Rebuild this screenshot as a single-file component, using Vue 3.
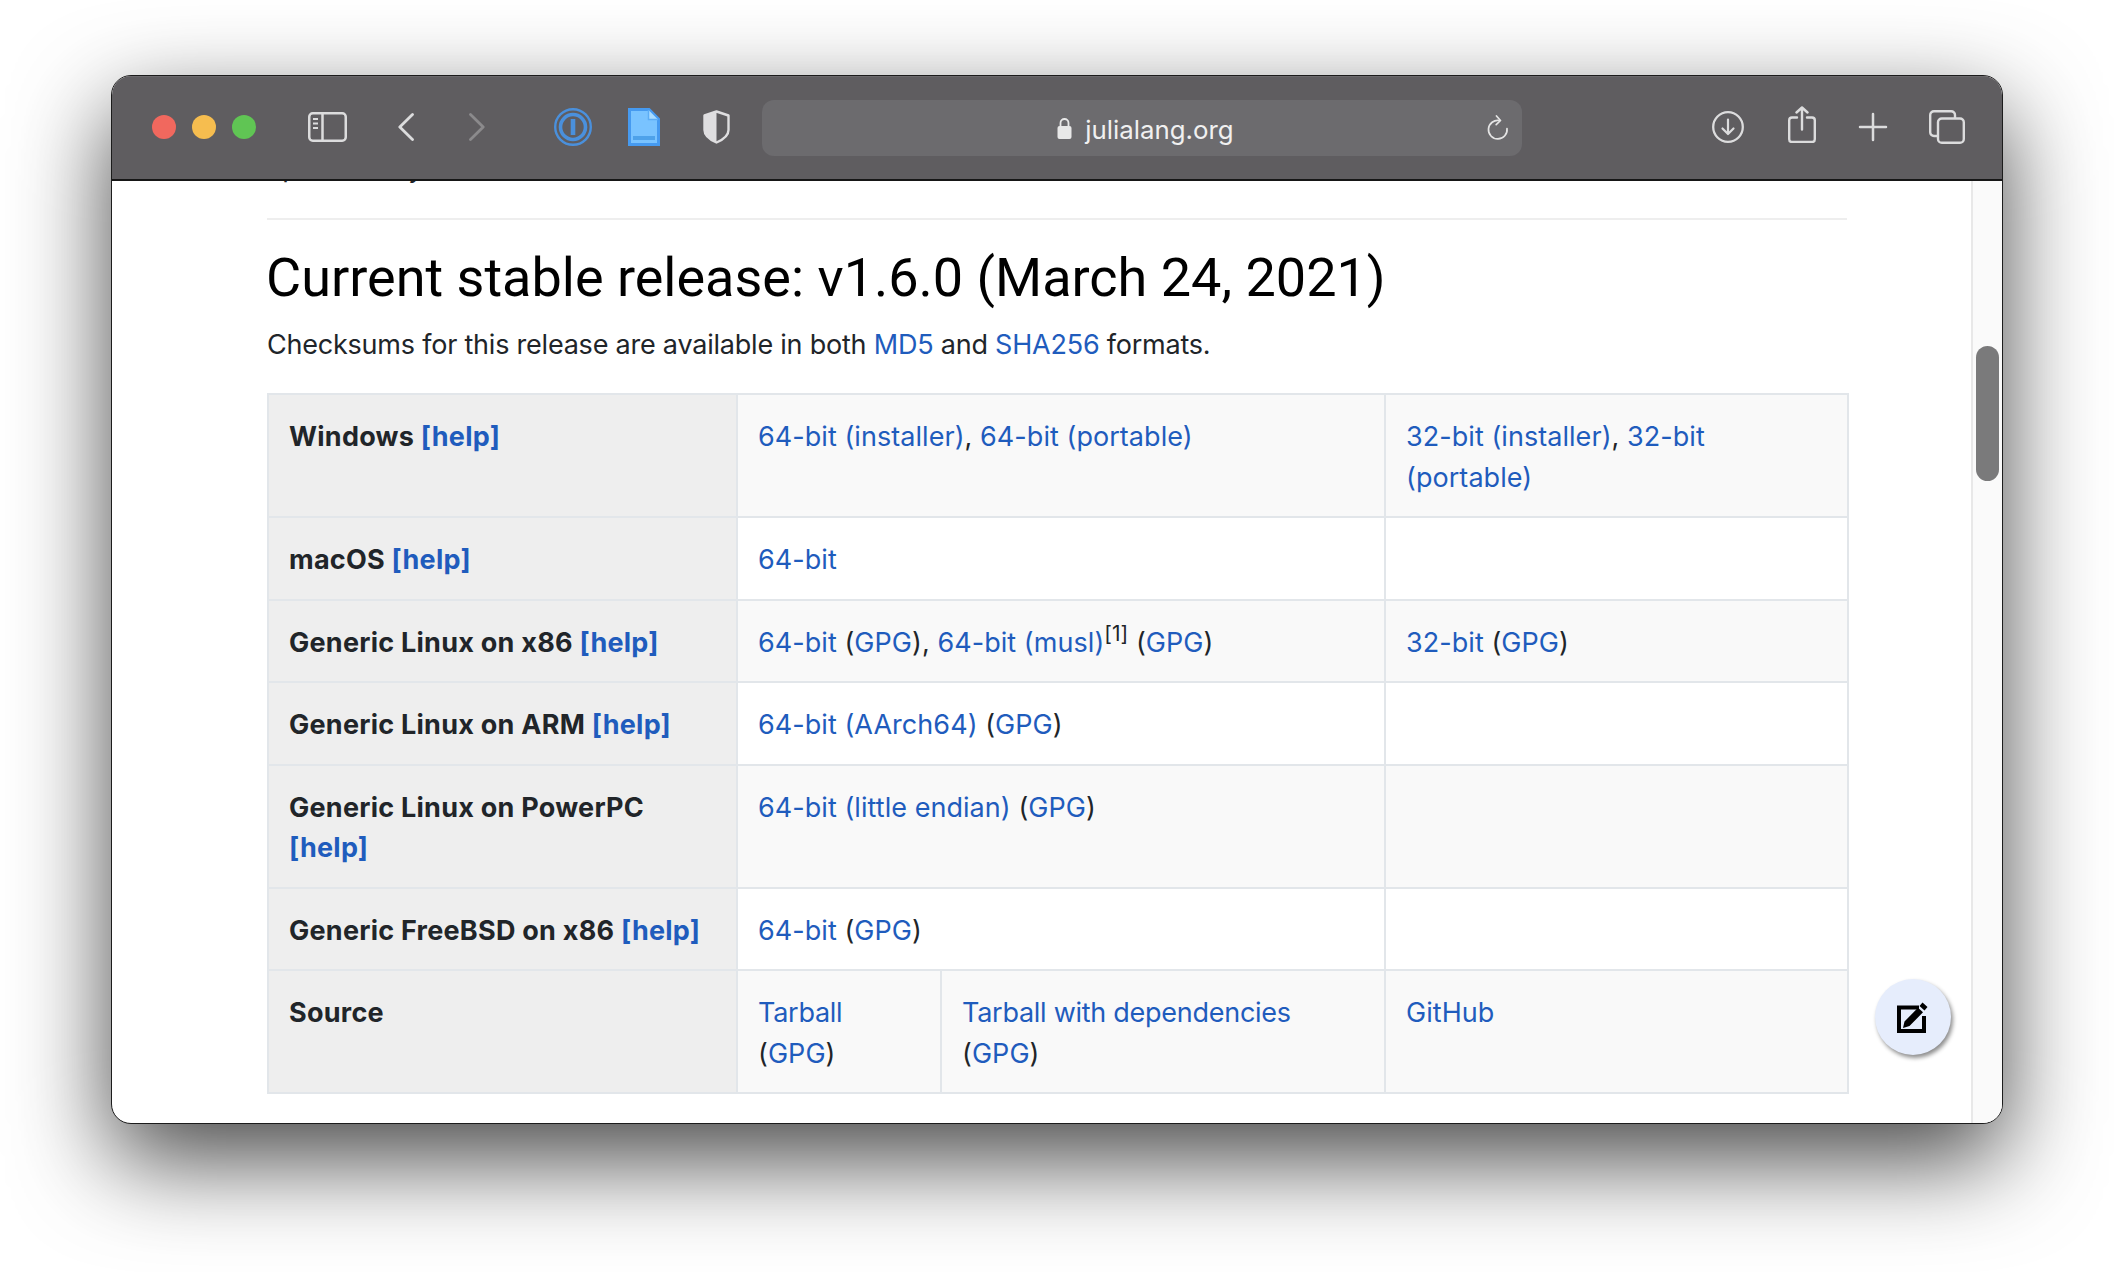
<template>
  <div class="stage">
    <div class="window">
      <header class="toolbar">
        <div class="lights">
          <span class="light light--red"></span>
          <span class="light light--yellow"></span>
          <span class="light light--green"></span>
        </div>
        <svg class="ico ico-sidebar" width="39" height="30" viewBox="0 0 39 30" fill="none" stroke="#dcdcdd" stroke-width="2.5">
          <rect x="1.25" y="1.25" width="36.5" height="27.5" rx="3.5" />
          <path d="M14.5 1v28" />
          <path d="M5 7h5M5 11.5h5M5 16h5" stroke-width="1.8" />
        </svg>
        <svg class="ico ico-back" width="16" height="28" viewBox="0 0 16 28" fill="none" stroke="#dcdcdd" stroke-width="2.8" stroke-linecap="round" stroke-linejoin="round">
          <path d="M14.5 1.5 1.8 14l12.7 12.5" />
        </svg>
        <svg class="ico ico-forward" width="16" height="28" viewBox="0 0 16 28" fill="none" stroke="#8b8a8c" stroke-width="2.8" stroke-linecap="round" stroke-linejoin="round">
          <path d="M1.5 1.5 14.2 14 1.5 26.5" />
        </svg>
        <svg class="ico ico-onepass" width="38" height="38" viewBox="0 0 38 38" fill="none" stroke="#4a90dc">
          <circle cx="19" cy="19" r="17.8" stroke-width="2.4" />
          <circle cx="19" cy="19" r="12.5" stroke-width="3.6" />
          <path d="M19 11v16" stroke-width="4.6" />
        </svg>
        <svg class="ico ico-doc" width="32" height="38" viewBox="0 0 32 38">
          <path d="M1.5 1.5H21L30.5 11v25.5h-29z" fill="#79c3ff" stroke="#469af0" stroke-width="3" />
          <path d="M20.5 2v9.5H30" fill="#a9dcff" stroke="#5cadf5" stroke-width="1.5" />
          <path d="M5 28h22v4H5z" fill="#4ea2ea" />
        </svg>
        <svg class="ico ico-shield" width="27" height="34" viewBox="0 0 27 34" fill="none">
          <path d="M13.5 1.5 25.5 5.5V20c0 5-5 9.500-12 12.500C6.500 29.500 1.500 25 1.500 20V5.500z" stroke="#dfdee0" stroke-width="2.4" stroke-linejoin="round" />
          <path d="M13.500 1.500V32.500C6.500 29.500 1.500 25 1.500 20V5.500z" fill="#dfdee0" />
        </svg>
        <div class="urlbar">
          <span></span>
          <div class="urlbar__site">
            <svg width="15" height="22" viewBox="0 0 15 22">
              <path d="M3.500 9V6a4 4 0 0 1 8 0v3" fill="none" stroke="#e8e8e8" stroke-width="1.800" />
              <rect x="0.500" y="9" width="14" height="13" rx="2" fill="#e8e8e8" />
            </svg>
            <span class="urlbar__host">julialang.org</span>
          </div>
          <svg class="urlbar__reload" width="22" height="25" viewBox="0 0 22 25" fill="none" stroke="#e4e4e4" stroke-width="1.700" stroke-linecap="round" stroke-linejoin="round">
            <path d="M12.500 5.500A9.300 9.300 0 1 0 20 13.500" />
            <path d="M9.500 1 13.500 5.500 9.200 9.600" />
          </svg>
        </div>
        <svg class="ico ico-download" width="32" height="32" viewBox="0 0 32 32" fill="none" stroke="#dcdcdd" stroke-linecap="round" stroke-linejoin="round">
          <circle cx="16" cy="16" r="14.800" stroke-width="2.300" />
          <path d="M16 8.500v14M10.500 17.500l5.500 5.500 5.500-5.500" stroke-width="2.200" />
        </svg>
        <svg class="ico ico-share" width="28" height="37" viewBox="0 0 28 37" fill="none" stroke="#dcdcdd" stroke-width="2.400" stroke-linecap="round" stroke-linejoin="round">
          <path d="M9 11.500H4a2.800 2.800 0 0 0-2.800 2.800v18.900A2.800 2.800 0 0 0 4 36h20a2.800 2.800 0 0 0 2.800-2.800V14.300A2.800 2.800 0 0 0 24 11.500h-5" />
          <path d="M14 23.500V1.500M8.500 6.500 14 1.500l5.500 5" />
        </svg>
        <svg class="ico ico-plus" width="30" height="30" viewBox="0 0 30 30" fill="none" stroke="#dcdcdd" stroke-width="2.500" stroke-linecap="round">
          <path d="M15 2v26M2 15h26" />
        </svg>
        <svg class="ico ico-tabs" width="36" height="34" viewBox="0 0 36 34" fill="none" stroke="#dcdcdd" stroke-width="2.400">
          <path d="M8.500 26H5a3.800 3.800 0 0 1-3.800-3.800V5A3.800 3.800 0 0 1 5 1.200h17.200A3.800 3.800 0 0 1 26 5v3.500" />
          <rect x="9" y="8.500" width="25.800" height="24.300" rx="3.800" />
        </svg>
      </header>

      <div class="viewport">
        <main class="page">
          <p class="page__clipped">specifically</p>
          <hr class="page__rule" />
          <h1>Current stable release: v1.6.0 (March 24, 2021)</h1>
          <p class="page__lead">
            Checksums for this release are available in both <a href="#">MD5</a> and <a href="#">SHA256</a> formats.
          </p>

          <table class="downloads">
            <colgroup>
              <col class="downloads__c1" />
              <col class="downloads__c2" />
              <col class="downloads__c3" />
              <col class="downloads__c4" />
            </colgroup>
            <tbody>
              <tr>
                <th>Windows <a href="#">[help]</a></th>
                <td colspan="2"><a href="#">64-bit (installer)</a>, <a href="#">64-bit (portable)</a></td>
                <td><a href="#">32-bit (installer)</a>, <a href="#">32-bit (portable)</a></td>
              </tr>
              <tr>
                <th>macOS <a href="#">[help]</a></th>
                <td colspan="2"><a href="#">64-bit</a></td>
                <td></td>
              </tr>
              <tr>
                <th>Generic Linux on x86 <a href="#">[help]</a></th>
                <td colspan="2">
                  <a href="#">64-bit</a> (<a href="#">GPG</a>), <a href="#">64-bit (musl)</a><sup>[1]</sup> (<a href="#">GPG</a>)
                </td>
                <td><a href="#">32-bit</a> (<a href="#">GPG</a>)</td>
              </tr>
              <tr>
                <th>Generic Linux on ARM <a href="#">[help]</a></th>
                <td colspan="2"><a href="#">64-bit (AArch64)</a> (<a href="#">GPG</a>)</td>
                <td></td>
              </tr>
              <tr>
                <th>Generic Linux on PowerPC <a href="#">[help]</a></th>
                <td colspan="2"><a href="#">64-bit (little endian)</a> (<a href="#">GPG</a>)</td>
                <td></td>
              </tr>
              <tr>
                <th>Generic FreeBSD on x86 <a href="#">[help]</a></th>
                <td colspan="2"><a href="#">64-bit</a> (<a href="#">GPG</a>)</td>
                <td></td>
              </tr>
              <tr>
                <th>Source</th>
                <td><a href="#" class="tight">Tarball</a><br />(<a href="#">GPG</a>)</td>
                <td><a href="#" class="tight">Tarball with dependencies</a><br />(<a href="#">GPG</a>)</td>
                <td><a href="#">GitHub</a></td>
              </tr>
            </tbody>
          </table>

          <button type="button" class="fab" aria-label="Edit">
            <svg width="32" height="32" viewBox="0 0 32 32">
              <path d="M22 6.500H2v23.500h25V15" fill="none" stroke="#000" stroke-width="4" />
              <path d="M25.500 1.500 30.500 6 27.500 9.500 22.500 5zM21 6.800l5 4.500-13.500 13.700-6.500 2 1.500-6.500z" fill="#000" />
            </svg>
          </button>
        </main>

        <aside class="scrollbar">
          <div class="scrollbar__thumb"></div>
        </aside>
      </div>
    </div>
  </div>
</template>

<script setup>
</script>

<style>
html,
body {
  background: #fff;
}
</style>

<style scoped>
.stage {
  height: 1272px;
  padding: 75px 0 0 111px;
  box-sizing: border-box;
  overflow: hidden;
  background: #fff;
  font-family: Inter, "Liberation Sans", sans-serif;
}

.window {
  width: 1892px;
  height: 1049px;
  box-sizing: border-box;
  border: 1px solid #1c1c1c;
  border-radius: 20px;
  overflow: hidden;
  display: flex;
  flex-direction: column;
  background: #fff;
  box-shadow: 0 36px 96px rgba(0, 0, 0, 0.72);
}

.toolbar {
  flex: 0 0 105px;
  box-sizing: border-box;
  display: flex;
  align-items: center;
  padding: 0 0 3px 40px;
  background: #5f5d60;
  border-top: 1px solid #6c6a6d;
  border-bottom: 2px solid #161616;
}

.ico {
  flex: none;
}

.lights {
  display: flex;
  gap: 16px;
}

.light {
  width: 24px;
  height: 24px;
  border-radius: 50%;
}

.light--red {
  background: #f1685e;
}

.light--yellow {
  background: #f6bd4f;
}

.light--green {
  background: #60c554;
}

.ico-sidebar {
  margin-left: 52px;
}

.ico-back {
  margin-left: 51px;
}

.ico-forward {
  margin-left: 55px;
}

.ico-onepass {
  margin-left: 69px;
}

.ico-doc {
  margin-left: 36px;
}

.ico-shield {
  margin-left: 43px;
}

.urlbar {
  flex: none;
  width: 760px;
  height: 56px;
  margin: 2px 0 0 32px;
  padding: 0 13px 0 20px;
  box-sizing: border-box;
  display: grid;
  grid-template-columns: 1fr auto 1fr;
  align-items: center;
  background: #6c6b6e;
  border-radius: 12px;
}

.urlbar__site {
  display: flex;
  align-items: center;
  gap: 13px;
  color: #f0f0f0;
  font-size: 25.8px;
}

.urlbar__host {
  padding-top: 3px;
}

.urlbar__reload {
  justify-self: end;
}

.ico-download {
  margin-left: 190px;
}

.ico-share {
  margin-left: 44px;
  margin-bottom: 5px;
}

.ico-plus {
  margin-left: 42px;
}

.ico-tabs {
  margin-left: 41px;
}

.viewport {
  flex: 1;
  min-height: 0;
  display: flex;
}

.page {
  position: relative;
  flex: 1;
  min-width: 0;
  overflow: hidden;
  padding: 0 0 0 155px;
  color: #212529;
  font-size: 27px;
  line-height: 40.5px;
}

.page__clipped {
  margin: -33px 0 0;
  color: #212529;
  letter-spacing: 1.1px;
}

.page__rule {
  width: 1580px;
  height: 2px;
  margin: 29px 0 0;
  border: 0;
  background: #eeeeee;
}

h1 {
  margin: 26px 0 0 -1px;
  color: #000;
  font-family: Roboto, Inter, sans-serif;
  font-size: 54px;
  font-weight: 400;
  line-height: 64px;
}

.page__lead {
  margin: 15px 0 0;
  letter-spacing: -0.22px;
}

a {
  color: #1f5cbd;
  text-decoration: none;
}

.tight {
  letter-spacing: -0.27px;
}

.downloads {
  width: 1580px;
  margin-top: 28px;
  table-layout: fixed;
  border-collapse: collapse;
  box-sizing: border-box;
}

.downloads__c1 {
  width: 469px;
}

.downloads__c2 {
  width: 204px;
}

.downloads__c3 {
  width: 444px;
}

.downloads__c4 {
  width: 463px;
}

th,
td {
  padding: 22px 20px 18px;
  border: 2px solid #e2e6ea;
  text-align: left;
  vertical-align: top;
}

td {
  letter-spacing: 0.05px;
}

th {
  background: #eeeeee;
  font-weight: 700;
  letter-spacing: 0.25px;
}

th a {
  font-weight: 700;
}

tbody tr:nth-child(odd) td {
  background: #f9f9f9;
}

sup {
  font-size: 21px;
  line-height: 0;
  vertical-align: 11px;
}

.fab {
  position: absolute;
  top: 798px;
  right: 20px;
  width: 76px;
  height: 76px;
  padding: 0;
  display: flex;
  align-items: center;
  justify-content: center;
  border: 0;
  border-radius: 50%;
  background: #e6edfc;
  box-shadow: 2px 3px 4px rgba(0, 0, 0, 0.45);
}

.scrollbar {
  flex: 0 0 31px;
  box-sizing: border-box;
  padding: 165px 3px 0 3px;
  background: #fafafa;
  border-left: 2px solid #e8e8e8;
}

.scrollbar__thumb {
  height: 135px;
  border-radius: 12px;
  background: #7a7a7b;
}
</style>
